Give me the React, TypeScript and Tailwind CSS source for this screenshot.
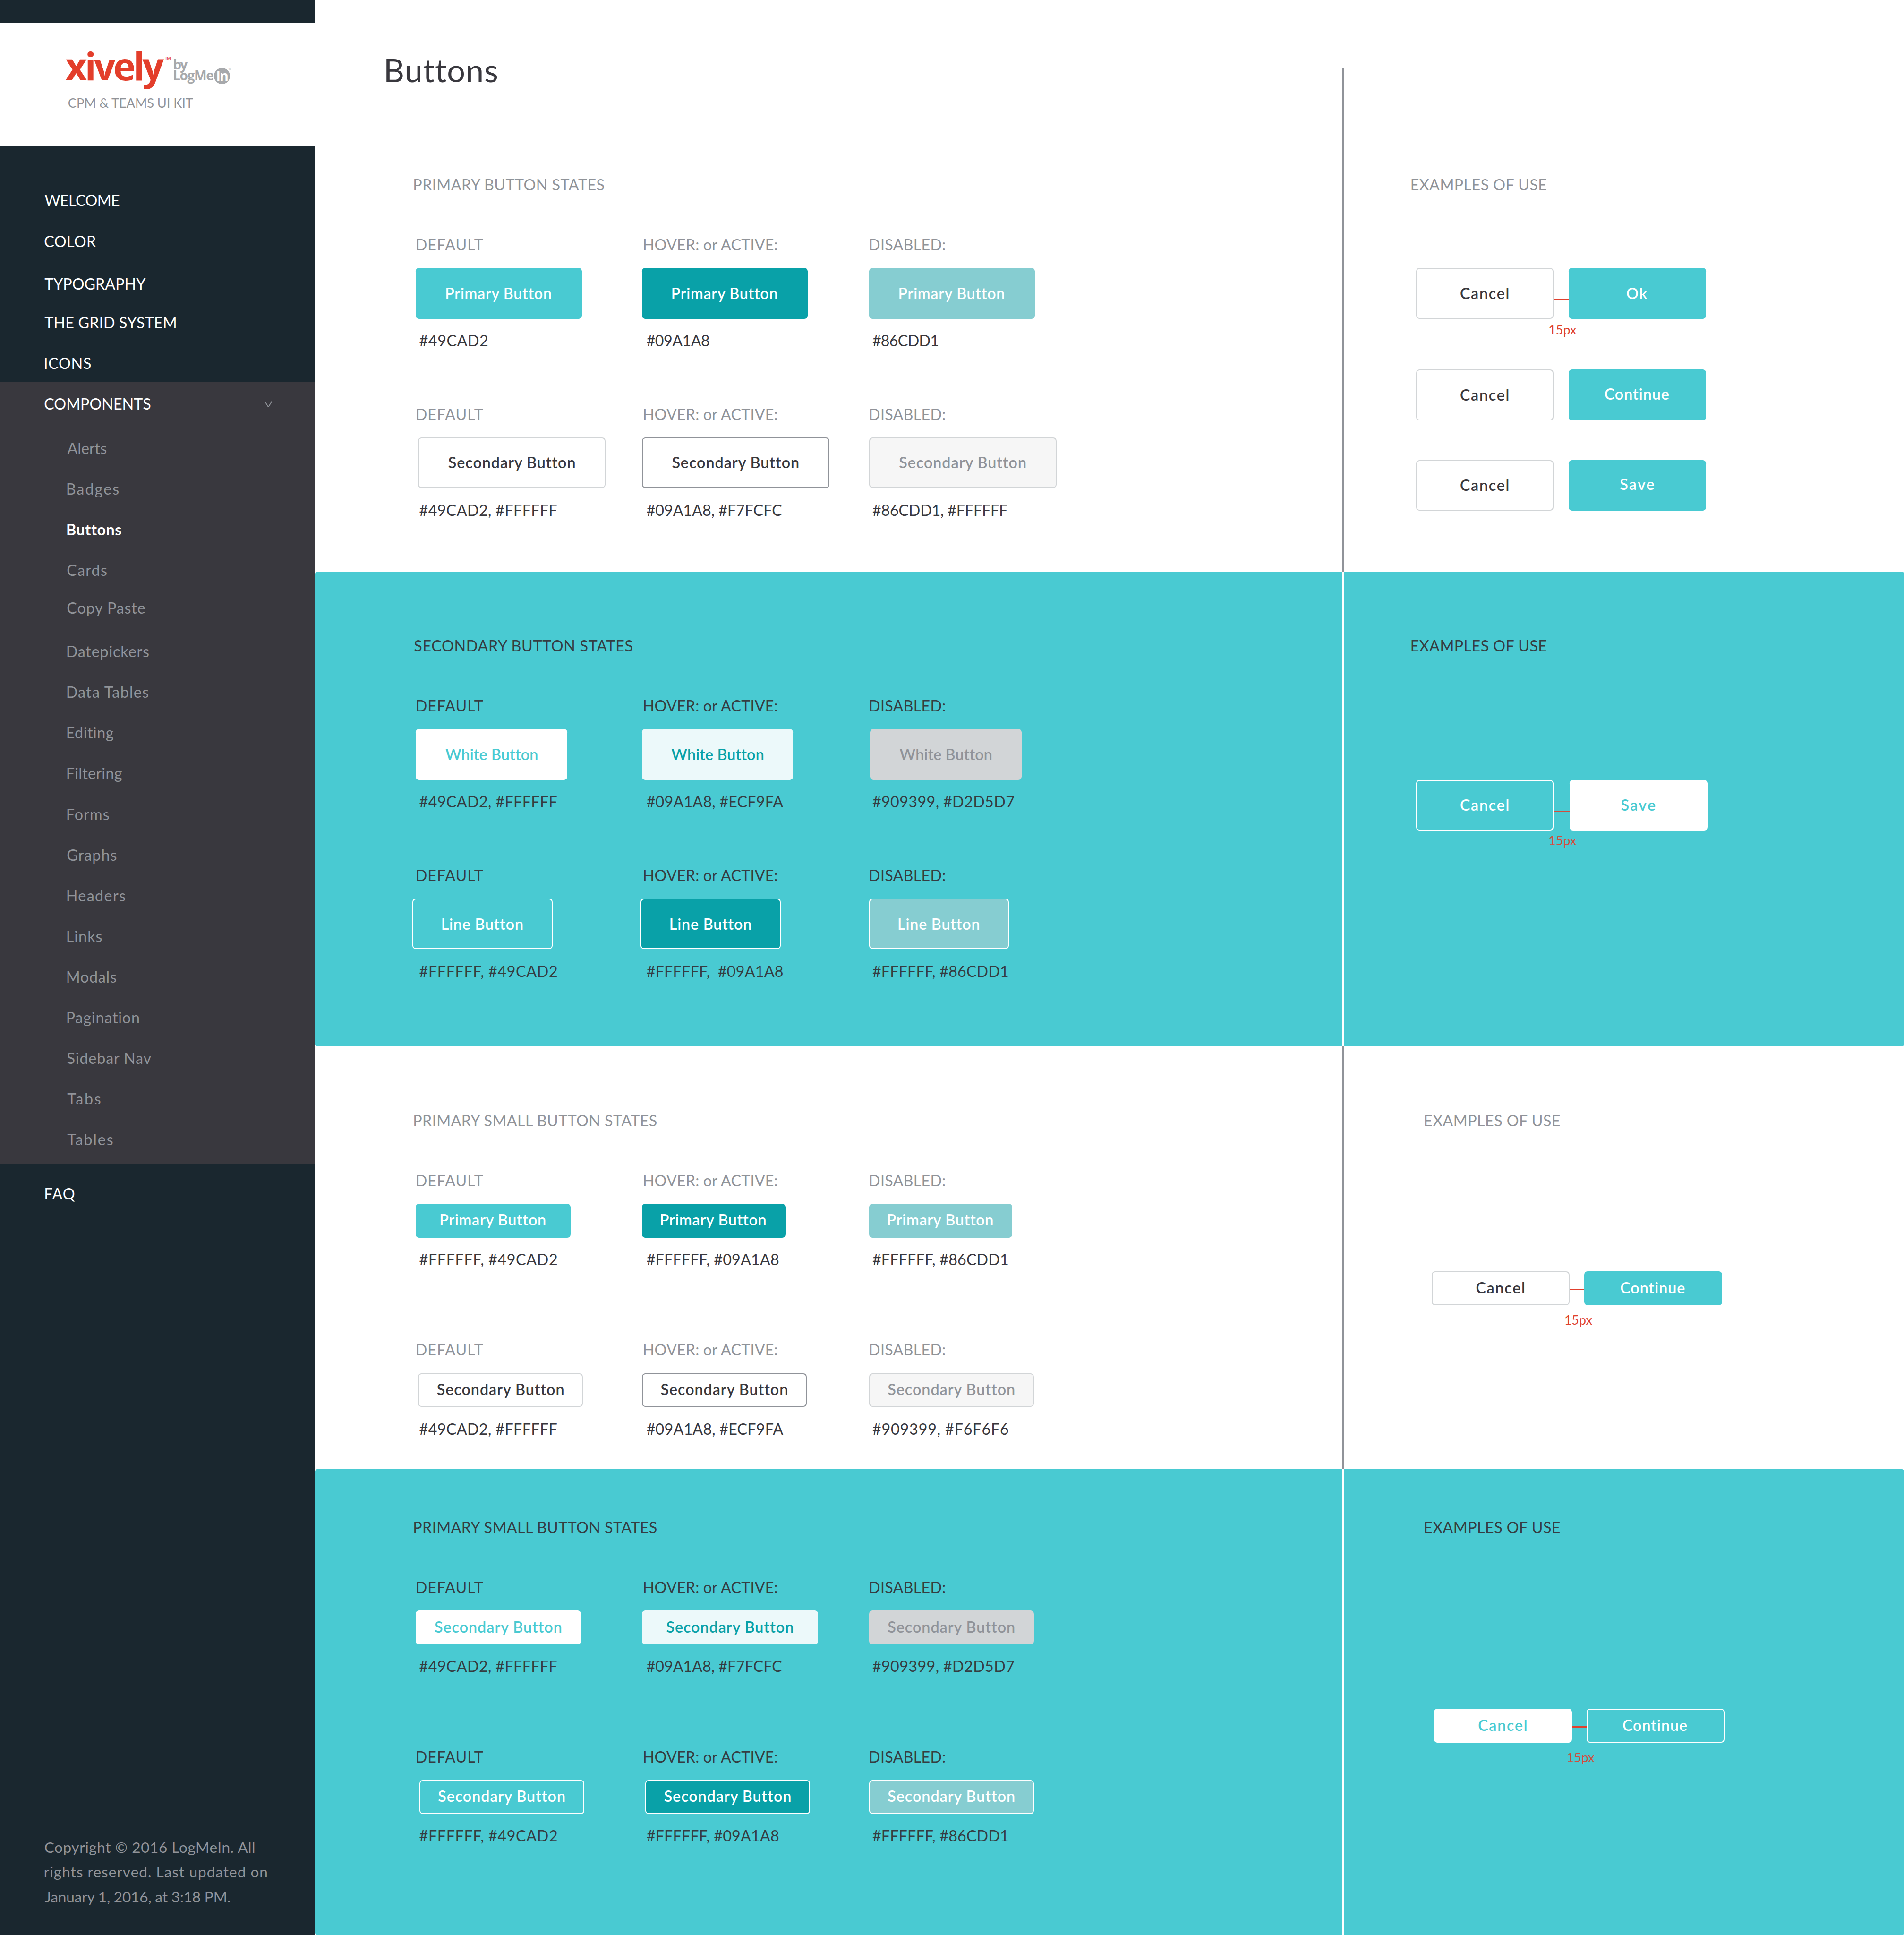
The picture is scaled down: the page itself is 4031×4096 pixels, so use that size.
import { useLayoutEffect, useRef, useState } from "react";
import type { CSSProperties, ReactNode } from "react";
import clsx from "clsx";

/* ---------- Text fitted to an exact ink width ---------- */

type TextProps = { w: number; children: string; className?: string };

function Text({ w, children, className }: TextProps) {
  const ref = useRef<HTMLSpanElement>(null);
  const [fit, setFit] = useState<CSSProperties>({});

  useLayoutEffect(() => {
    const el = ref.current;
    const ctx = document.createElement("canvas").getContext("2d");
    if (!el || !ctx) return;
    const cs = getComputedStyle(el);
    ctx.font = `${cs.fontWeight} 100px ${cs.fontFamily}`;
    const m = ctx.measureText(children);
    const k = parseFloat(cs.fontSize) / 100;
    const ink = (m.actualBoundingBoxLeft + m.actualBoundingBoxRight) * k;
    setFit({
      width: w,
      letterSpacing: (w - ink) / Math.max(1, children.length - 1),
      textIndent: m.actualBoundingBoxLeft * k + 0.2,
    });
  }, [w, children]);

  return (
    <span ref={ref} style={fit} className={clsx("block shrink-0 whitespace-pre", className)}>
      {children}
    </span>
  );
}

/* ---------- Sidebar ---------- */

type NavEntry = { label: string; w: number; gap: string; active?: boolean };

const topNav: NavEntry[] = [
  { label: "WELCOME", w: 66.1, gap: "mt-0" },
  { label: "COLOR", w: 45.5, gap: "mt-4" },
  { label: "TYPOGRAPHY", w: 89.5, gap: "mt-[18px]" },
  { label: "THE GRID SYSTEM", w: 116, gap: "mt-[14px]" },
  { label: "ICONS", w: 40.4, gap: "mt-4 ml-[0.4px]" },
];

const subNav: NavEntry[] = [
  { label: "Alerts", w: 34.5, gap: "mt-[19px]" },
  { label: "Badges", w: 45.4, gap: "mt-4" },
  { label: "Buttons", w: 47.1, gap: "mt-4", active: true },
  { label: "Cards", w: 34.8, gap: "mt-4" },
  { label: "Copy Paste", w: 68.9, gap: "mt-[13.3px]" },
  { label: "Datepickers", w: 72.1, gap: "mt-[18.7px]" },
  { label: "Data Tables", w: 72.1, gap: "mt-4" },
  { label: "Editing", w: 40.9, gap: "mt-4" },
  { label: "Filtering", w: 48.2, gap: "mt-4" },
  { label: "Forms", w: 36.8, gap: "mt-4" },
  { label: "Graphs", w: 43.4, gap: "mt-4" },
  { label: "Headers", w: 51.2, gap: "mt-4" },
  { label: "Links", w: 30.5, gap: "mt-4" },
  { label: "Modals", w: 43.2, gap: "mt-4" },
  { label: "Pagination", w: 63.6, gap: "mt-4" },
  { label: "Sidebar Nav", w: 74.5, gap: "mt-4" },
  { label: "Tabs", w: 29.3, gap: "mt-4" },
  { label: "Tables", w: 40.2, gap: "mt-4" },
];

function Logo() {
  return (
    <div className="mt-5 h-[109px] bg-white pt-[18.3px] pl-[57.6px]">
      <div className="flex h-10 items-start font-['Open_Sans',sans-serif] font-bold">
        <Text w={87.3} className="text-[33.4px] leading-10 text-[#e33e2b]">xively</Text>
        <Text w={5} className="mt-[11.2px] ml-[0.8px] text-[4px] leading-[4px] font-semibold text-[#e33e2b]">TM</Text>
        <div className="mt-[13.9px] ml-[3px] w-[35.7px] text-[11.8px] leading-[9.6px] text-[#a7a9ac]">
          <Text w={12.2}>by</Text>
          <Text w={35}>LogMe</Text>
        </div>
        <div className="mt-[21.7px] flex size-[14.4px] justify-center rounded-full bg-[#a7a9ac]">
          <Text w={9.3} className="text-[11.8px] leading-[13.4px] text-white">In</Text>
        </div>
        <span className="mt-[21.6px] -ml-[1.6px] text-[2.6px] leading-[3px] font-normal text-[#a7a9ac]">®</span>
      </div>
      <Text w={110.6} className="mt-[4.8px] ml-[2.8px] text-[11.4px] leading-4 text-[#909399]">CPM &amp; TEAMS UI KIT</Text>
    </div>
  );
}

function Sidebar() {
  return (
    <aside className="flex w-[279px] shrink-0 flex-col bg-[#1a272f] text-white">
      <Logo />
      <nav>
        <div className="h-[209px] pt-[38.4px] pl-[39.3px]">
          {topNav.map((n) => (
            <Text key={n.label} w={n.w} className={n.gap}>{n.label}</Text>
          ))}
        </div>
        <div className="h-[692px] bg-[#39383e] pt-[9.5px]">
          <div className="flex items-center justify-between pr-[38.3px] pl-[39.3px]">
            <Text w={93.6}>COMPONENTS</Text>
            <svg viewBox="0 0 6.8 5.4" className="h-[5.4px] w-[6.8px]" fill="none" stroke="#909399" strokeWidth="0.8" strokeLinecap="round" strokeLinejoin="round">
              <path d="M0.4 0.4 L3.1 4.8 Q3.4 5.1 3.7 4.8 L6.4 0.4" />
            </svg>
          </div>
          <div className="pl-[59.4px]">
            {subNav.map((n) => (
              <Text key={n.label} w={n.w} className={clsx(n.gap, n.active ? "font-bold text-white" : "text-[#909399]")}>
                {n.label}
              </Text>
            ))}
          </div>
        </div>
        <Text w={26} className="mt-[16.4px] ml-[40px]">FAQ</Text>
      </nav>
      <footer className="mt-auto mb-[22.8px] ml-[39.5px] text-[13.2px] leading-[22px] text-[#909399]">
        <Text w={185.9}>Copyright © 2016 LogMeIn. All</Text>
        <Text w={196.6}>rights reserved. Last updated on</Text>
        <Text w={164.2}>January 1, 2016, at 3:18 PM.</Text>
      </footer>
    </aside>
  );
}

/* ---------- Buttons ---------- */

const tones = {
  primary: "bg-[#49cad2] text-white",
  primaryHover: "bg-[#09a1a8] text-white",
  primaryOff: "bg-[#86cdd1] text-white",
  outline: "border border-[#d2d5d7] bg-white text-[#39383e]",
  outlineHover: "border border-[#909399] bg-white text-[#39383e]",
  outlineOff: "border border-[#d2d5d7] bg-[#f6f6f6] text-[#909399]",
  white: "bg-white text-[#49cad2]",
  whiteHover: "bg-[#ecf9fa] text-[#09a1a8]",
  whiteOff: "bg-[#d2d5d7] text-[#909399]",
  line: "border border-white text-white",
  lineHover: "border border-white bg-[#09a1a8] text-white",
  lineOff: "border border-white bg-[#86cdd1] text-white",
};

type ButtonProps = {
  tone: keyof typeof tones;
  label: string;
  labelW: number;
  size: string;
  small?: boolean;
  raised?: boolean;
};

function Button({ tone, label, labelW, size, small, raised }: ButtonProps) {
  return (
    <button
      type="button"
      className={clsx(
        "flex shrink-0 items-center justify-center rounded-[3px] pr-px font-semibold",
        small ? "h-[30px] pb-px" : "h-[45px]",
        raised && "pb-[2px]",
        size,
        tones[tone],
      )}
    >
      <Text w={labelW}>{label}</Text>
    </button>
  );
}

type State = {
  tone: keyof typeof tones;
  label: string;
  labelW: number;
  size: string;
  hex: string;
  hexW: number;
};

const columns = [
  { title: "DEFAULT", w: 58.4, titleGap: "ml-[0.8px]", hexGap: "ml-[3.1px]" },
  { title: "HOVER: or ACTIVE:", w: 118.3, titleGap: "ml-[1.8px]", hexGap: "ml-[4.2px]" },
  { title: "DISABLED:", w: 66.2, titleGap: "ml-[0.8px]", hexGap: "ml-[3.1px]" },
];

function StateRow({ states, small, muted }: { states: State[]; small?: boolean; muted: string }) {
  return (
    <div className="ml-[1.5px] grid h-[150px] grid-cols-[200px_201px_200px] items-start">
      {states.map((s, i) => (
        <div key={columns[i].title}>
          <Text w={columns[i].w} className={clsx(columns[i].titleGap, muted)}>{columns[i].title}</Text>
          <div className="mt-[10px] mb-[9px]">
            <Button tone={s.tone} label={s.label} labelW={s.labelW} size={s.size} small={small} />
          </div>
          <Text w={s.hexW} className={columns[i].hexGap}>{s.hex}</Text>
        </div>
      ))}
    </div>
  );
}

function Pair({ children, gap, line, className }: { children: [ReactNode, ReactNode]; gap: string; line?: string; className?: string }) {
  return (
    <div className={clsx("flex items-start", className)}>
      {children[0]}
      <div className={clsx("shrink-0", gap)}>
        {line && <div className={clsx("h-px bg-[#e0402e]", line)} />}
      </div>
      {children[1]}
    </div>
  );
}

function Spacing({ className }: { className: string }) {
  return <Text w={23.7} className={clsx("ml-[118px] text-[11.2px] leading-4 text-[#e0402e]", className)}>15px</Text>;
}

/* ---------- Sections ---------- */

type SectionProps = {
  title: string;
  titleW: number;
  teal?: boolean;
  small?: boolean;
  height: string;
  top: string;
  rows: State[][];
  header?: ReactNode;
  rightClass?: string;
  rightTitle: string;
  children: ReactNode;
};

function Section(p: SectionProps) {
  const muted = p.teal ? "text-[#353d42]" : "text-[#909399]";
  return (
    <section className={clsx("flex", p.height, p.teal ? "rounded-[2px] bg-[#49cad2] text-[#353d42]" : "text-[#39383e]")}>
      <div className="w-[909px] shrink-0">
        {p.header}
        <div className={clsx("pl-[87.5px]", p.top)}>
          <Text w={p.titleW} className={clsx("mb-[32px]", muted)}>{p.title}</Text>
          {p.rows.map((r, i) => (
            <StateRow key={i} states={r} small={p.small} muted={muted} />
          ))}
        </div>
      </div>
      <div className={clsx("flex-1 border-l-[1.3px]", p.teal ? "border-white" : "border-[#909399]", p.rightClass ?? p.top)}>
        <Text w={119.6} className={clsx(p.rightTitle, muted)}>EXAMPLES OF USE</Text>
        {p.children}
      </div>
    </section>
  );
}

const PRI = { label: "Primary Button", labelW: 92.5 };
const SEC = { label: "Secondary Button", labelW: 111.7 };
const WHT = { label: "White Button", labelW: 80.8 };
const LIN = { label: "Line Button", labelW: 70.7 };

const primaryRows: State[][] = [
  [
    { ...PRI, tone: "primary", size: "w-[147px]", hex: "#49CAD2", hexW: 60.2 },
    { ...PRI, tone: "primaryHover", size: "w-[147px]", hex: "#09A1A8", hexW: 55.3 },
    { ...PRI, tone: "primaryOff", size: "w-[147px]", hex: "#86CDD1", hexW: 57.8 },
  ],
  [
    { ...SEC, tone: "outline", size: "w-[166px] ml-[2px]", hex: "#49CAD2, #FFFFFF", hexW: 121.6 },
    { ...SEC, tone: "outlineHover", size: "w-[166px]", hex: "#09A1A8, #F7FCFC", hexW: 119.6 },
    { ...SEC, tone: "outlineOff", size: "w-[166px]", hex: "#86CDD1, #FFFFFF", hexW: 119.2 },
  ],
];

const secondaryRows: State[][] = [
  [
    { ...WHT, tone: "white", size: "w-[134px]", hex: "#49CAD2, #FFFFFF", hexW: 121.6 },
    { ...WHT, tone: "whiteHover", size: "w-[134px]", hex: "#09A1A8, #ECF9FA", hexW: 120.8 },
    { ...WHT, tone: "whiteOff", size: "w-[134px] ml-px", hex: "#909399, #D2D5D7", hexW: 125.2 },
  ],
  [
    { ...LIN, tone: "line", size: "w-[124px] -ml-[3px]", hex: "#FFFFFF, #49CAD2", hexW: 121.6 },
    { ...LIN, tone: "lineHover", size: "w-[124px] -ml-px", hex: "#FFFFFF,  #09A1A8", hexW: 120.4 },
    { ...LIN, tone: "lineOff", size: "w-[124px]", hex: "#FFFFFF, #86CDD1", hexW: 119.6 },
  ],
];

const smallRows: State[][] = [
  [
    { ...PRI, tone: "primary", size: "w-[137px]", hex: "#FFFFFF, #49CAD2", hexW: 121.6 },
    { ...PRI, tone: "primaryHover", size: "w-[127px]", hex: "#FFFFFF, #09A1A8", hexW: 116.7 },
    { ...PRI, tone: "primaryOff", size: "w-[127px]", hex: "#FFFFFF, #86CDD1", hexW: 119.6 },
  ],
  [
    { ...SEC, tone: "outline", size: "w-[146px] ml-[2px]", hex: "#49CAD2, #FFFFFF", hexW: 121.6 },
    { ...SEC, tone: "outlineHover", size: "w-[146px]", hex: "#09A1A8, #ECF9FA", hexW: 120.8 },
    { ...SEC, tone: "outlineOff", size: "w-[146px]", hex: "#909399, #F6F6F6", hexW: 120 },
  ],
];

const smallTealRows: State[][] = [
  [
    { ...SEC, tone: "white", size: "w-[146px]", hex: "#49CAD2, #FFFFFF", hexW: 121.6 },
    { ...SEC, tone: "whiteHover", size: "w-[156px]", hex: "#09A1A8, #F7FCFC", hexW: 119.6 },
    { ...SEC, tone: "whiteOff", size: "w-[146px]", hex: "#909399, #D2D5D7", hexW: 125.2 },
  ],
  [
    { ...SEC, tone: "line", size: "w-[146px] ml-[3px]", hex: "#FFFFFF, #49CAD2", hexW: 121.6 },
    { ...SEC, tone: "lineHover", size: "w-[146px] ml-[3px]", hex: "#FFFFFF, #09A1A8", hexW: 116.7 },
    { ...SEC, tone: "lineOff", size: "w-[146px]", hex: "#FFFFFF, #86CDD1", hexW: 119.6 },
  ],
];

const W = "w-[122px]";

export default function App() {
  return (
    <div className="h-[4096px] w-[4031px] overflow-hidden bg-white">
      <div className="flex h-[1712.2px] w-[1685px] font-[Lato,sans-serif] text-[13.5px] leading-5 [zoom:2.39228]">
        <Sidebar />
        <main className="flex-1 leading-[21px]">
          <Section
            title="PRIMARY BUTTON STATES"
            titleW={168.4}
            height="h-[506px]"
            top="pt-[75px]"
            rows={primaryRows}
            header={
              <h1 className="pt-[46px] pl-[62.8px] text-[28.5px] leading-8">
                <Text w={97}>Buttons</Text>
              </h1>
            }
            rightClass="mt-[60px] pt-[93px]"
            rightTitle="ml-[59.8px]"
          >
            <div className="mt-[63px] ml-[63.8px]">
              <Pair gap="w-[13px]" line="mt-[27.5px]">
                <Button tone="outline" label="Cancel" labelW={42.3} size={W} />
                <Button tone="primary" label="Ok" labelW={17.9} size={W} />
              </Pair>
              <Spacing className="mt-[1.9px] mb-[27.1px]" />
              <Pair gap="w-[13px]">
                <Button tone="outline" label="Cancel" labelW={42.3} size={W} />
                <Button tone="primary" label="Continue" labelW={56.6} size={W} raised />
              </Pair>
              <Pair gap="w-[13px]" className="mt-[35px]">
                <Button tone="outline" label="Cancel" labelW={42.3} size={W} />
                <Button tone="primary" label="Save" labelW={30.1} size={W} raised />
              </Pair>
            </div>
          </Section>

          <Section
            title="SECONDARY BUTTON STATES"
            titleW={193.5}
            teal
            height="h-[420px]"
            top="pt-[55px]"
            rows={secondaryRows}
            rightTitle="ml-[59.8px]"
          >
            <div className="mt-[108px] ml-[63.8px]">
              <Pair gap="w-[14px]" line="mt-[27.3px] opacity-90">
                <Button tone="line" label="Cancel" labelW={42.3} size={W} />
                <Button tone="white" label="Save" labelW={30.1} size={W} />
              </Pair>
              <Spacing className="mt-[0.8px] opacity-90" />
            </div>
          </Section>

          <Section
            title="PRIMARY SMALL BUTTON STATES"
            titleW={215.3}
            small
            height="h-[374px]"
            top="pt-[55px]"
            rows={smallRows}
            rightTitle="ml-[71.7px]"
          >
            <div className="mt-[123px] ml-[77.8px]">
              <Pair gap="w-[13px]" line="mt-[15.6px]">
                <Button tone="outline" label="Cancel" labelW={42.3} size={W} small />
                <Button tone="primary" label="Continue" labelW={56.6} size={W} small />
              </Pair>
              <Spacing className="mt-[5px]" />
            </div>
          </Section>

          <Section
            title="PRIMARY SMALL BUTTON STATES"
            titleW={215.3}
            teal
            small
            height="h-[412.2px]"
            top="pt-[41px]"
            rows={smallTealRows}
            rightTitle="ml-[71.7px]"
          >
            <div className="mt-[150px] ml-[79.8px]">
              <Pair gap="w-[13px]" line="mt-[15.6px]">
                <Button tone="white" label="Cancel" labelW={42.3} size={W} small />
                <Button tone="line" label="Continue" labelW={56.6} size={W} small />
              </Pair>
              <Spacing className="mt-[5px] opacity-90" />
            </div>
          </Section>
        </main>
      </div>
    </div>
  );
}
